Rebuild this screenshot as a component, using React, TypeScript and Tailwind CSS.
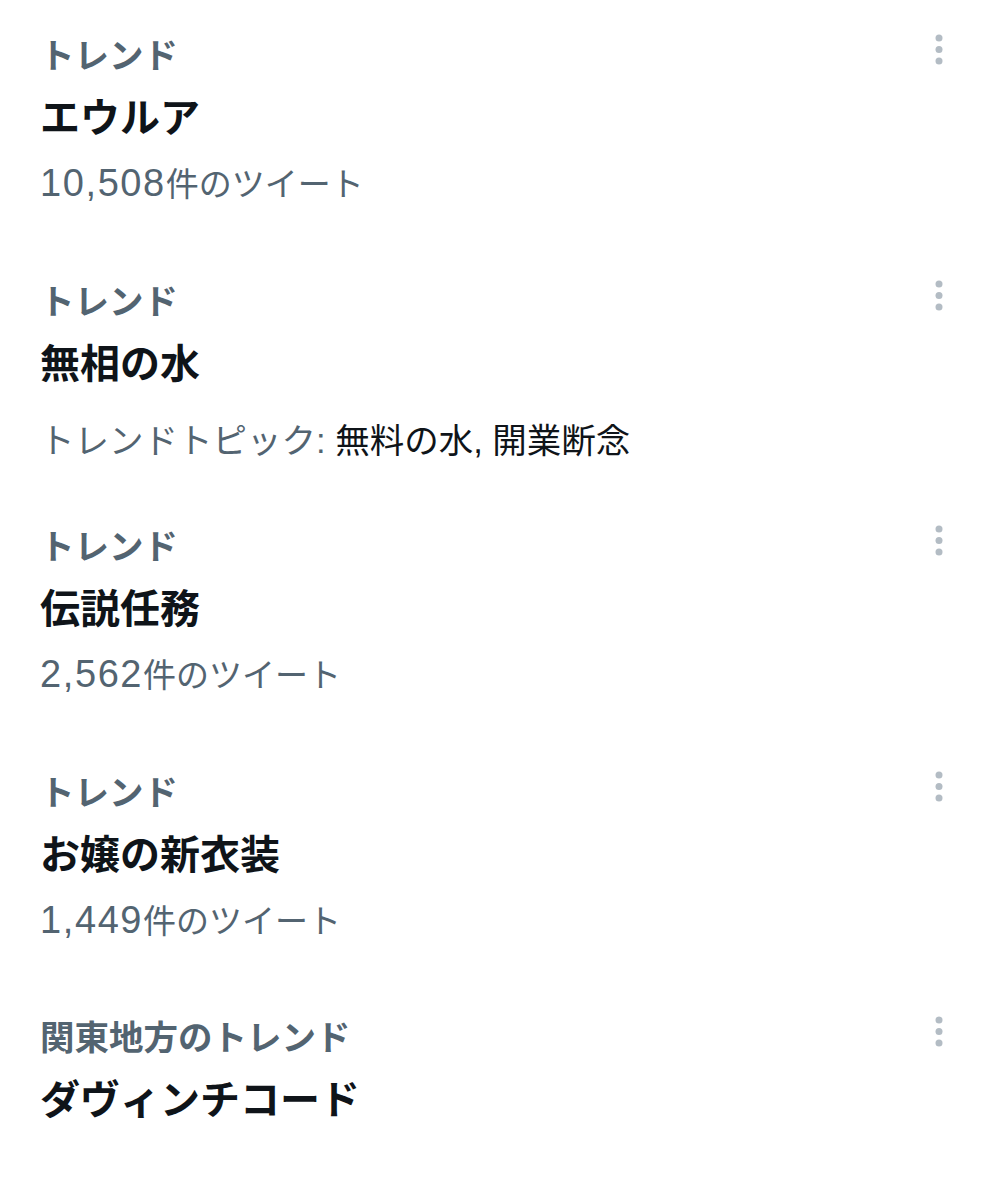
const FONT = "font-['Liberation_Sans','Noto_Sans_CJK_JP',sans-serif]";

type Trend = {
  label: string;
  title: string;
  count?: string;
  topics?: string;
};

const TRENDS: Trend[] = [
  { label: "トレンド", title: "エウルア", count: "10,508" },
  { label: "トレンド", title: "無相の水", topics: "無料の水, 開業断念" },
  { label: "トレンド", title: "伝説任務", count: "2,562" },
  { label: "トレンド", title: "お嬢の新衣装", count: "1,449" },
  { label: "関東地方のトレンド", title: "ダヴィンチコード" },
];

function MoreIcon() {
  return (
    <svg width="14" height="32" viewBox="0 0 14 32" className="text-[#b3bcc4]">
      <circle cx="7" cy="4" r="3.5" fill="currentColor" />
      <circle cx="7" cy="15.5" r="3.5" fill="currentColor" />
      <circle cx="7" cy="27" r="3.5" fill="currentColor" />
    </svg>
  );
}

function TrendItem({ trend }: { trend: Trend }) {
  return (
    <div className="flex h-[245.5px] items-start pl-10 pr-[42px] pt-[34px]">
      <div className="flex-1">
        <div className="text-[34.5px] font-bold leading-[44px] text-[#536471]">
          {trend.label}
        </div>
        <div className="mt-[14px] text-[40px] font-bold leading-[52px] text-[#0f1419]">
          {trend.title}
        </div>
        {trend.count && (
          <div className="mt-[17px] text-[33px] leading-[44px] text-[#536471]">
            <span className="text-[38px] tracking-[1.6px]">{trend.count}</span>件のツイート
          </div>
        )}
        {trend.topics && (
          <div className="mt-[29px] text-[34.5px] leading-[44px] text-[#536471]">
            トレンドトピック: <span className="text-[#0f1419]">{trend.topics}</span>
          </div>
        )}
      </div>
      <MoreIcon />
    </div>
  );
}

export default function App() {
  return (
    <div className={`${FONT} min-h-[1200px] w-full bg-white`}>
      {TRENDS.map((t, i) => (
        <TrendItem key={i} trend={t} />
      ))}
    </div>
  );
}
